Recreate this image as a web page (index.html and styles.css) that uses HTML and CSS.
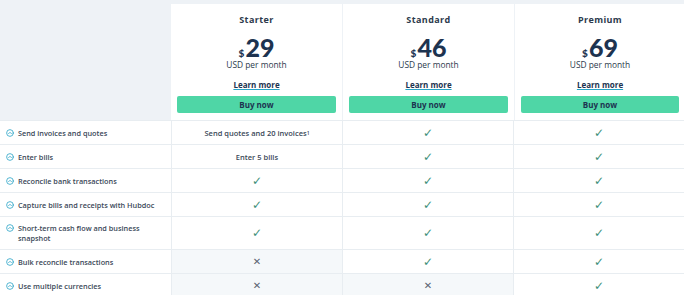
FILE: index.html
```html
<!DOCTYPE html>
<html>
<head>
<meta charset="utf-8">
<link rel="stylesheet" href="styles.css">
</head>
<body>
<div class="table">
  <div class="head">
    <div class="blank"></div>
    <div class="plan">
      <div class="name">Starter</div>
      <div class="price"><span class="cur">$</span>29</div>
      <div class="per">USD per month</div>
      <a class="learn">Learn more</a>
      <div class="buy">Buy now</div>
    </div>
    <div class="plan">
      <div class="name">Standard</div>
      <div class="price"><span class="cur">$</span>46</div>
      <div class="per">USD per month</div>
      <a class="learn">Learn more</a>
      <div class="buy">Buy now</div>
    </div>
    <div class="plan">
      <div class="name">Premium</div>
      <div class="price"><span class="cur">$</span>69</div>
      <div class="per">USD per month</div>
      <a class="learn">Learn more</a>
      <div class="buy">Buy now</div>
    </div>
  </div>

  <div class="row">
    <div class="label"><svg class="ic" viewBox="0 0 10 10"><circle cx="5" cy="5" r="4.2"/><path d="M3.2 5.9 5 4.1 6.8 5.9"/></svg>Send invoices and quotes</div>
    <div class="cell txt">Send quotes and 20 invoices<sup>1</sup></div>
    <div class="cell"><span class="yes">✓</span></div>
    <div class="cell"><span class="yes">✓</span></div>
  </div>
  <div class="row">
    <div class="label"><svg class="ic" viewBox="0 0 10 10"><circle cx="5" cy="5" r="4.2"/><path d="M3.2 5.9 5 4.1 6.8 5.9"/></svg>Enter bills</div>
    <div class="cell txt">Enter 5 bills</div>
    <div class="cell"><span class="yes">✓</span></div>
    <div class="cell"><span class="yes">✓</span></div>
  </div>
  <div class="row">
    <div class="label"><svg class="ic" viewBox="0 0 10 10"><circle cx="5" cy="5" r="4.2"/><path d="M3.2 5.9 5 4.1 6.8 5.9"/></svg>Reconcile bank transactions</div>
    <div class="cell"><span class="yes">✓</span></div>
    <div class="cell"><span class="yes">✓</span></div>
    <div class="cell"><span class="yes">✓</span></div>
  </div>
  <div class="row">
    <div class="label"><svg class="ic" viewBox="0 0 10 10"><circle cx="5" cy="5" r="4.2"/><path d="M3.2 5.9 5 4.1 6.8 5.9"/></svg>Capture bills and receipts with Hubdoc</div>
    <div class="cell"><span class="yes">✓</span></div>
    <div class="cell"><span class="yes">✓</span></div>
    <div class="cell"><span class="yes">✓</span></div>
  </div>
  <div class="row tall">
    <div class="label"><svg class="ic" viewBox="0 0 10 10"><circle cx="5" cy="5" r="4.2"/><path d="M3.2 5.9 5 4.1 6.8 5.9"/></svg><span>Short-term cash flow and business<br>snapshot</span></div>
    <div class="cell"><span class="yes">✓</span></div>
    <div class="cell"><span class="yes">✓</span></div>
    <div class="cell"><span class="yes">✓</span></div>
  </div>
  <div class="row">
    <div class="label"><svg class="ic" viewBox="0 0 10 10"><circle cx="5" cy="5" r="4.2"/><path d="M3.2 5.9 5 4.1 6.8 5.9"/></svg>Bulk reconcile transactions</div>
    <div class="cell off"><span class="no">✕</span></div>
    <div class="cell"><span class="yes">✓</span></div>
    <div class="cell"><span class="yes">✓</span></div>
  </div>
  <div class="row last">
    <div class="label"><svg class="ic" viewBox="0 0 10 10"><circle cx="5" cy="5" r="4.2"/><path d="M3.2 5.9 5 4.1 6.8 5.9"/></svg>Use multiple currencies</div>
    <div class="cell off"><span class="no">✕</span></div>
    <div class="cell off"><span class="no">✕</span></div>
    <div class="cell"><span class="yes">✓</span></div>
  </div>
</div>
</body>
</html>
```

FILE: styles.css
```css
* { box-sizing: border-box; }
html, body { margin: 0; padding: 0; }
body {
  background: #ffffff;
  font-family: "Open Sans", "Liberation Sans", sans-serif;
  color: #26364a;
  width: 684px;
  height: 295px;
  overflow: hidden;
}
.table { display: flex; flex-direction: column; }
.head {
  display: grid;
  grid-template-columns: 170px 171px 171px 170px;
  column-gap: 1px;
  background: #eef2f6;
  padding-top: 4px;
  height: 120px;
}
.plan {
  background: #ffffff;
  display: flex;
  flex-direction: column;
  align-items: center;
  padding: 0 6px;
}
.name {
  margin-top: 10px;
  font-size: 9px;
  font-weight: 700;
  letter-spacing: 0.4px;
  color: #2c3a4c;
  line-height: 12px;
  height: 12px;
}
.price {
  margin-top: 9px;
  font-family: "Lato", "Noto Sans", sans-serif;
  font-size: 25px;
  font-weight: 900;
  color: #1d3350;
  line-height: 24px;
  height: 24px;
  display: flex;
  align-items: baseline;
}
.cur { font-size: 10px; font-weight: 900; margin-right: 1px; }
.per {
  font-size: 8.4px;
  line-height: 10px;
  height: 10px;
  margin-top: 1px;
  color: #2c3a4c;
}
.learn {
  margin-top: 10px;
  font-size: 8px;
  font-weight: 700;
  line-height: 10px;
  height: 10px;
  color: #1d3350;
  text-decoration: underline;
  text-decoration-color: #2aa3c6;
  text-decoration-thickness: 1px;
  text-underline-offset: 1px;
}
.buy {
  margin-top: 6px;
  align-self: stretch;
  height: 17px;
  flex: none;
  background: #4fd6a6;
  border-radius: 2px;
  font-size: 8px;
  font-weight: 700;
  color: #1d3350;
  display: flex;
  align-items: center;
  justify-content: center;
}
.row {
  display: grid;
  grid-template-columns: 171px 171px 171px 171px;
  height: 24px;
  border-top: 1px solid #e8edf1;
}
.row.tall { height: 33px; }
.label {
  display: flex;
  align-items: center;
  padding-left: 6px;
  font-size: 7.3px;
  font-weight: 600;
  color: #3a4858;
  line-height: 10px;
}
.ic {
  width: 8px;
  height: 8px;
  margin-right: 4px;
  flex: none;
  fill: none;
  stroke: #2aa3c6;
  stroke-width: 1;
  stroke-linecap: round;
  stroke-linejoin: round;
}
.row.tall .ic { align-self: flex-start; margin-top: 7px; }
.cell {
  border-left: 1px solid #e8edf1;
  display: flex;
  align-items: center;
  justify-content: center;
  font-size: 7.5px;
  color: #3a4858;
}
.cell.txt { font-weight: 600; }
.cell sup { font-size: 5px; line-height: 0; }
.cell.off { background: #f5f8fa; }
.yes { color: #3d8f78; font-size: 12px; font-family: "DejaVu Sans", sans-serif; }
.no { color: #5a6470; font-size: 10px; font-family: "DejaVu Sans", sans-serif; }
```
